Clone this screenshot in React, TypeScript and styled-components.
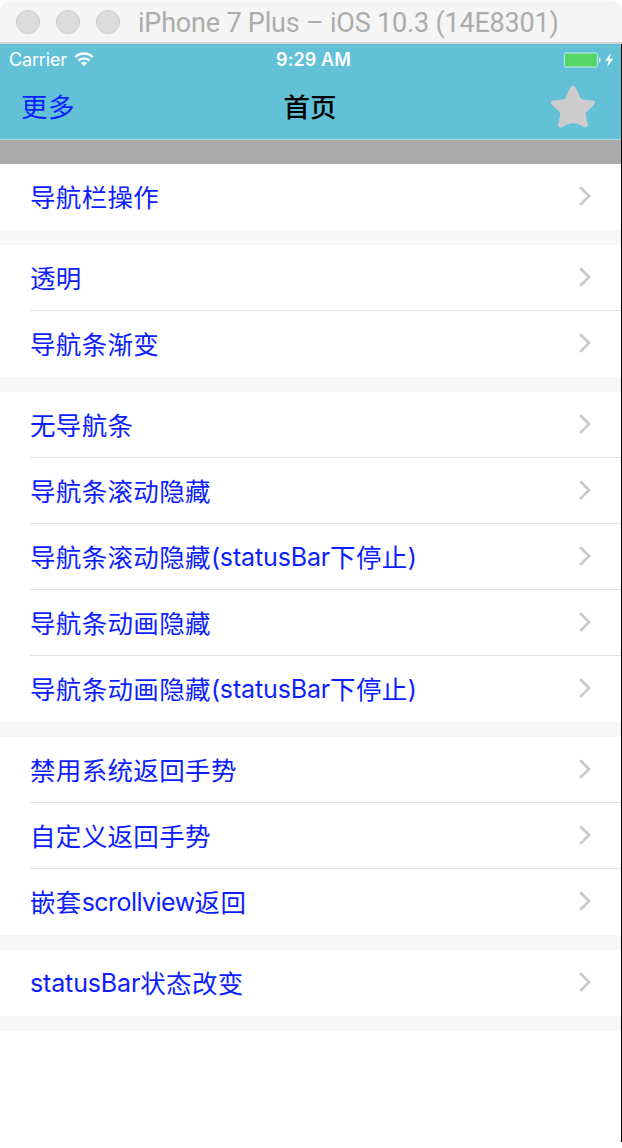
import React from "react";
import styled, { createGlobalStyle } from "styled-components";

const GlobalStyle = createGlobalStyle`
  * { box-sizing: border-box; }
  body {
    margin: 0;
    background: #fff;
    font-family: Inter, "Noto Sans CJK SC", sans-serif;
  }
`;

const Window = styled.div`
  width: 622px;
  height: 1142px;
  display: flex;
  flex-direction: column;
`;

const TitleBar = styled.header`
  height: 44px;
  flex: none;
  display: flex;
  align-items: center;
  padding: 0 0 0 16px;
  background: #f5f5f5;
  border-top: 1px solid #fafafa;
  border-bottom: 2px solid #d2d2d2;
  border-radius: 10px 10px 0 0;
`;

const Lights = styled.div`
  display: flex;
  gap: 16px;
  margin-right: 18px;
`;

const Light = styled.span`
  width: 24px;
  height: 24px;
  border-radius: 50%;
  background: #dcdcdc;
  border: 1px solid #cbcbcb;
`;

const WindowTitle = styled.h1`
  margin: 0;
  padding-top: 3px;
  font: 400 27px/38px Roboto, sans-serif;
  letter-spacing: -0.2px;
  color: #acacac;
  white-space: nowrap;
`;

const Screen = styled.main`
  flex: 1;
  border-right: 1px solid #000;
  background: #fff;
`;

const TopBar = styled.div`
  height: 96px;
  background: #62c1d7;
  border-bottom: 1px solid #a9d9e5;
`;

const StatusBar = styled.div`
  height: 31px;
  display: grid;
  grid-template-columns: 1fr auto 1fr;
  align-items: center;
  padding: 0 6px 0 9px;
  color: #fff;
  font-size: 18px;
`;

const Carrier = styled.div`
  display: flex;
  align-items: center;
  gap: 7px;
  letter-spacing: -0.15px;
`;

const Clock = styled.div`
  font-weight: 600;
  letter-spacing: 0.1px;
  padding-left: 3px;
`;

const Power = styled.div`
  display: flex;
  align-items: center;
  justify-content: flex-end;
`;

const NavBar = styled.nav`
  height: 64px;
  display: grid;
  grid-template-columns: 1fr auto 1fr;
  align-items: center;
  padding: 0 25px 0 21px;
  font-size: 26.5px;
`;

const NavAction = styled.a`
  padding-bottom: 4px;
  letter-spacing: 0.4px;
  color: #0d1eff;
`;

const NavTitle = styled.h2`
  margin: 0;
  padding: 0 0 4px 3px;
  font-size: 26.5px;
  font-weight: 500;
  color: #000;
`;

const StarSlot = styled.div`
  display: flex;
  justify-content: flex-end;
`;

const Header = styled.div`
  height: 24px;
  background: #aaa;
`;

const Section = styled.section`
  border-bottom: 15px solid #f7f7f7;
`;

const Row = styled.div`
  height: 66px;
  margin-left: 30px;
  padding: 0 30px 1px 0;
  display: flex;
  align-items: center;
  justify-content: space-between;
  &:not(:last-child) {
    padding-bottom: 0;
    border-bottom: 1px solid #e1e1e1;
  }
`;

const Label = styled.span`
  padding-top: 2px;
  font-size: 25.5px;
  line-height: 36px;
  color: #0d1eff;
  white-space: nowrap;
`;

const Run = styled.span<{ $latin: boolean; $tracking: number }>`
  font-size: ${(p) => (p.$latin ? "25px" : "25.5px")};
  line-height: 1;
  vertical-align: ${(p) => (p.$latin ? "1px" : "baseline")};
  letter-spacing: ${(p) => (p.$latin ? p.$tracking : 0.34)}px;
`;

type Item = { text: string; tracking?: number };

const sections: Item[][] = [
  [{ text: "导航栏操作" }],
  [{ text: "透明" }, { text: "导航条渐变" }],
  [
    { text: "无导航条" },
    { text: "导航条滚动隐藏" },
    { text: "导航条滚动隐藏(statusBar下停止)" },
    { text: "导航条动画隐藏" },
    { text: "导航条动画隐藏(statusBar下停止)" },
  ],
  [{ text: "禁用系统返回手势" }, { text: "自定义返回手势" }, { text: "嵌套scrollview返回", tracking: -0.55 }],
  [{ text: "statusBar状态改变" }],
];

const splitRuns = (text: string) => text.match(/[\x20-\x7e]+|[^\x20-\x7e]+/g) ?? [];

const ChevronIcon = styled.svg`
  flex: none;
  margin-bottom: 1px;
`;

const Chevron = () => (
  <ChevronIcon width="13" height="20" viewBox="0 0 13 20" fill="none">
    <path d="M2.2 1.3 11 10.1 2.2 18.9" stroke="#c7c7cc" strokeWidth="2.7" />
  </ChevronIcon>
);

const Wifi = () => (
  <svg width="20" height="15" viewBox="0 0 20 15" fill="none" stroke="#fff">
    <path d="M1.2 5.2a12.6 12.6 0 0 1 17.6 0" strokeWidth="2.5" />
    <path d="M4.5 8.6a7.8 7.8 0 0 1 11 0" strokeWidth="2.3" />
    <path d="M10 14.2 6.9 11.1a4.4 4.4 0 0 1 6.2 0Z" fill="#fff" stroke="none" />
  </svg>
);

const Battery = () => (
  <svg width="52" height="16" viewBox="0 0 52 16">
    <rect x="1.5" y="1" width="33" height="14" rx="1.6" fill="#53d769" stroke="#c5e8ef" />
    <path d="M36 5.6c2 .4 2 4.4 0 4.8Z" fill="#fff" />
    <path d="M47.8 1 42.2 8.8h3.4L44.2 15l6-8.2h-3.6Z" fill="#fff" />
  </svg>
);

const Star = () => (
  <svg width="46" height="44" viewBox="0 0 46 44">
    <path
      d="M20.6 2.3Q23-.6 25.4 2.3Q28 6.5 30.2 12.5Q31 14.2 33 14.5L43 15.6Q46.2 16.5 44.4 19.2Q41 23 36.8 26.6Q35.6 28 35.8 30L37.8 39.6Q37.8 43.2 34.6 42.4Q32.5 41.8 30 39.8Q23 36.8 16 39.8Q13.5 41.8 11.4 42.4Q8.2 43.2 8.2 39.6L10.2 30Q10.4 28 9.2 26.6Q5 23 1.6 19.2Q-.2 16.5 3 15.6L13 14.5Q15 14.2 15.8 12.5Q18 6.5 20.6 2.3Z"
      fill="#ccc"
    />
  </svg>
);

export default function App() {
  return (
    <>
      <GlobalStyle />
      <Window>
        <TitleBar>
          <Lights>
            <Light />
            <Light />
            <Light />
          </Lights>
          <WindowTitle>iPhone 7 Plus – iOS 10.3 (14E8301)</WindowTitle>
        </TitleBar>
        <Screen>
          <TopBar>
            <StatusBar>
              <Carrier>
                Carrier <Wifi />
              </Carrier>
              <Clock>9:29 AM</Clock>
              <Power>
                <Battery />
              </Power>
            </StatusBar>
            <NavBar>
              <NavAction>更多</NavAction>
              <NavTitle>首页</NavTitle>
              <StarSlot>
                <Star />
              </StarSlot>
            </NavBar>
          </TopBar>
          <Header />
          {sections.map((rows) => (
            <Section key={rows[0].text}>
              {rows.map(({ text, tracking = -0.14 }) => (
                <Row key={text}>
                  <Label>
                    {splitRuns(text).map((run, i) => (
                      <Run key={i} $latin={/^[\x20-\x7e]/.test(run)} $tracking={tracking}>
                        {run}
                      </Run>
                    ))}
                  </Label>
                  <Chevron />
                </Row>
              ))}
            </Section>
          ))}
        </Screen>
      </Window>
    </>
  );
}
